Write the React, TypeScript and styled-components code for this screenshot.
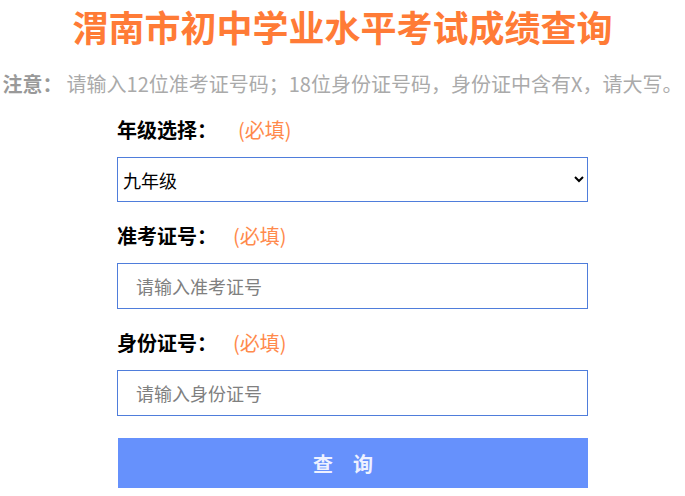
import React, { useState } from 'react'
import styled, { createGlobalStyle } from 'styled-components'

const GlobalStyle = createGlobalStyle`
  html, body {
    margin: 0;
    padding: 0;
    background: #fff;
    font-family: "Noto Sans CJK SC", "Noto Sans", sans-serif;
  }
`

const Page = styled.div`
  width: 685px;
  overflow: hidden;
`

const Title = styled.h1`
  margin: 0;
  height: 54px;
  line-height: 52px;
  text-align: center;
  font-size: 36px;
  font-weight: 700;
  color: #ff7b36;
`

const Notice = styled.p`
  margin: 15px 0 0;
  line-height: 30px;
  text-align: center;
  white-space: nowrap;
  font-size: 20px;
  color: #aaa;

  b {
    margin-right: 4px;
    color: #999;
    font-weight: 700;
  }
`

const Form = styled.form`
  width: 471px;
  margin: 0 0 0 117px;
  padding-top: 15px;
`

const Field = styled.div`
  & + & {
    margin-top: 18px;
  }
`

const LabelRow = styled.div`
  display: flex;
  align-items: center;
  height: 30px;
  margin-bottom: 13px;
`

const Label = styled.label`
  font-size: 20px;
  font-weight: 700;
  color: #000;
`

const Required = styled.span<{ $gap: number }>`
  margin-left: ${(p) => p.$gap}px;
  font-size: 20px;
  color: #ff8a4c;
`

const Select = styled.select`
  display: block;
  box-sizing: border-box;
  width: 471px;
  height: 45px;
  padding: 0 6px 0 1px;
  border: 1px solid #4f7ddb;
  border-radius: 0;
  background: #fff;
  font-family: inherit;
  font-size: 18px;
  color: #000;
  outline: none;
`

const Input = styled.input`
  display: block;
  box-sizing: border-box;
  width: 471px;
  height: 46px;
  padding: 0 18px;
  border: 1px solid #4f7ddb;
  border-radius: 0;
  font-family: inherit;
  font-size: 18px;
  outline: none;

  &::placeholder {
    color: #808080;
  }
`

const Submit = styled.button`
  display: block;
  box-sizing: border-box;
  width: 470px;
  height: 50px;
  margin: 22px 0 0 1px;
  padding: 0;
  border: none;
  background: #6691fc;
  font-family: inherit;
  font-size: 20px;
  font-weight: 700;
  letter-spacing: 20px;
  color: #eef1ff;
  cursor: pointer;
`

const grades = ['七年级', '八年级', '九年级']

export default function App() {
  const [grade, setGrade] = useState('九年级')
  const [examNo, setExamNo] = useState('')
  const [idNo, setIdNo] = useState('')

  return (
    <Page>
      <GlobalStyle />
      <Title>渭南市初中学业水平考试成绩查询</Title>
      <Notice>
        <b>注意：</b>请输入12位准考证号码；18位身份证号码，身份证中含有X，请大写。
      </Notice>
      <Form onSubmit={(e) => e.preventDefault()}>
        <Field>
          <LabelRow>
            <Label htmlFor="grade">年级选择：</Label>
            <Required $gap={21}>(必填)</Required>
          </LabelRow>
          <Select id="grade" value={grade} onChange={(e) => setGrade(e.target.value)}>
            {grades.map((g) => (
              <option key={g} value={g}>
                {g}
              </option>
            ))}
          </Select>
        </Field>
        <Field>
          <LabelRow>
            <Label htmlFor="examNo">准考证号：</Label>
            <Required $gap={16}>(必填)</Required>
          </LabelRow>
          <Input
            id="examNo"
            placeholder="请输入准考证号"
            value={examNo}
            onChange={(e) => setExamNo(e.target.value)}
          />
        </Field>
        <Field>
          <LabelRow>
            <Label htmlFor="idNo">身份证号：</Label>
            <Required $gap={16}>(必填)</Required>
          </LabelRow>
          <Input
            id="idNo"
            placeholder="请输入身份证号"
            value={idNo}
            onChange={(e) => setIdNo(e.target.value)}
          />
        </Field>
        <Submit type="submit">查询</Submit>
      </Form>
    </Page>
  )
}
